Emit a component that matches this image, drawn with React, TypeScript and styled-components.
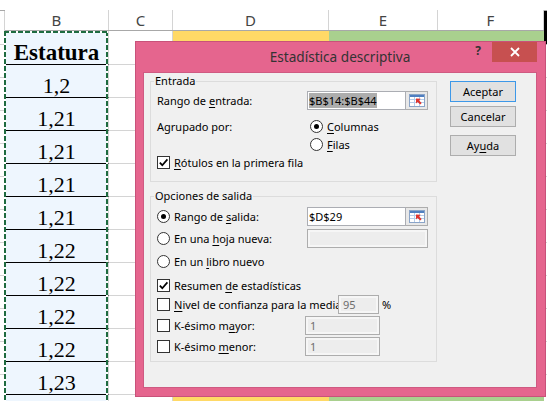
import styled, { createGlobalStyle } from "styled-components";

const GlobalStyle = createGlobalStyle`
  html, body {
    margin: 0;
    padding: 0;
    background: #fff;
    overflow: hidden;
  }
  body {
    font-family: "Noto Sans", "Open Sans", sans-serif;
  }
`;

type SheetCol = { name: string; width: number; fill?: string; grid?: boolean };

const sheetCols: SheetCol[] = [
  { name: "", width: 5, grid: true },
  { name: "B", width: 104 },
  { name: "C", width: 64, grid: true },
  { name: "D", width: 156, fill: "#ffd966" },
  { name: "E", width: 109, fill: "#a9d08e" },
  { name: "F", width: 106, fill: "#a9d08e" },
  { name: "", width: 60, grid: true },
];

// column B: header cell plus the first values of the range, last row is blank below the fold
const estatura = ["Estatura", "1,2", "1,21", "1,21", "1,21", "1,21", "1,22", "1,22", "1,22", "1,22", "1,23", ""];

const rowHeight = (i: number) => (i === 0 ? 34 : 33);

export default function App() {
  return (
    <>
      <GlobalStyle />
      <Sheet>
        {sheetCols.map((col, ci) => (
          <Column key={ci} $width={col.width}>
            <HeaderCell>
              <HeaderLabel>{col.name}</HeaderLabel>
            </HeaderCell>
            {col.name === "B" ? (
              <CopyRange>
                {estatura.map((v, i) => (
                  <DataCell key={i} $height={rowHeight(i)} $bold={i === 0}>
                    {v}
                  </DataCell>
                ))}
                <MarchingAnts />
              </CopyRange>
            ) : (
              estatura.map((_, i) => (
                <Cell
                  key={i}
                  $height={rowHeight(i)}
                  $fill={col.fill}
                  $grid={col.grid}
                  $active={ci === 6 && i === 0}
                />
              ))
            )}
          </Column>
        ))}

        <Dialog>
          <TitleBar>
            <Title>Estadística descriptiva</Title>
            <TitleControls>
              <HelpMark>?</HelpMark>
              <CloseButton>
                <svg width="10" height="10" viewBox="0 0 10 10">
                  <path d="M1 1L9 9M9 1L1 9" stroke="#fff" strokeWidth="1.8" />
                </svg>
              </CloseButton>
            </TitleControls>
          </TitleBar>

          <DialogBody>
            <Groups>
              <Group $top={0} $bottom={10}>
                <Legend>Entrada</Legend>
                <Row $cols="150px 99px 22px" $h={19} $gap={2}>
                  <span>
                    Rango de <u>e</u>ntrada:
                  </span>
                  <TextBox>
                    <Selected>$B$14:$B$44</Selected>
                  </TextBox>
                  <PickButton>
                    <RangeIcon />
                  </PickButton>
                </Row>
                <Row $cols="153px auto" $gap={7}>
                  <span>Agrupado por:</span>
                  <Choice>
                    <RadioDot $checked />
                    <span>
                      <u>C</u>olumnas
                    </span>
                  </Choice>
                </Row>
                <Row $cols="153px auto">
                  <span />
                  <Choice>
                    <RadioDot />
                    <span>
                      <u>F</u>ilas
                    </span>
                  </Choice>
                </Row>
                <Row>
                  <Choice>
                    <CheckBox $checked>
                      <CheckMark />
                    </CheckBox>
                    <span>
                      <u>R</u>ótulos en la primera fila
                    </span>
                  </Choice>
                </Row>
              </Group>

              <Group $top={6} $bottom={5}>
                <Legend>Opciones de salida</Legend>
                <Row $cols="150px 99px 22px" $h={19} $gap={3}>
                  <Choice>
                    <RadioDot $checked />
                    <span>
                      Rango de <u>s</u>alida:
                    </span>
                  </Choice>
                  <TextBox>$D$29</TextBox>
                  <PickButton>
                    <RangeIcon />
                  </PickButton>
                </Row>
                <Row $cols="150px 121px" $h={19} $gap={3}>
                  <Choice>
                    <RadioDot />
                    <span>
                      En una <u>h</u>oja nueva:
                    </span>
                  </Choice>
                  <TextBox $disabled />
                </Row>
                <Row $gap={4}>
                  <Choice>
                    <RadioDot />
                    <span>
                      En un <u>l</u>ibro nuevo
                    </span>
                  </Choice>
                </Row>
                <Row $gap={6}>
                  <Choice>
                    <CheckBox $checked>
                      <CheckMark />
                    </CheckBox>
                    <span>
                      Resumen <u>d</u>e estadísticas
                    </span>
                  </Choice>
                </Row>
                <Row $cols="181px 41px auto" $h={19} $gap={1}>
                  <Choice>
                    <CheckBox />
                    <span>
                      <u>N</u>ivel de confianza para la media
                    </span>
                  </Choice>
                  <TextBox $disabled>95</TextBox>
                  <Percent>%</Percent>
                </Row>
                <Row $cols="148px 75px" $h={19} $gap={2}>
                  <Choice>
                    <CheckBox />
                    <span>
                      K-ésimo m<u>a</u>yor:
                    </span>
                  </Choice>
                  <TextBox $disabled>1</TextBox>
                </Row>
                <Row $cols="148px 75px" $h={19} $gap={2}>
                  <Choice>
                    <CheckBox />
                    <span>
                      K-ésimo <u>m</u>enor:
                    </span>
                  </Choice>
                  <TextBox $disabled>1</TextBox>
                </Row>
              </Group>
            </Groups>

            <ButtonColumn>
              <DialogButton $default>Aceptar</DialogButton>
              <DialogButton $gap={4}>Cancelar</DialogButton>
              <DialogButton $gap={8}>
                Ay<u>u</u>da
              </DialogButton>
            </ButtonColumn>
          </DialogBody>
        </Dialog>
      </Sheet>
    </>
  );
}

function RangeIcon() {
  return (
    <svg width="16" height="13" viewBox="0 0 16 13">
      <rect x="0.5" y="0.5" width="15" height="12" fill="#fff" stroke="#8aa4c8" />
      <rect x="1" y="1" width="14" height="2" fill="#4f7fc0" />
      <path d="M1 5.5h14M1 8.5h14M5.5 3v9M10.5 3v9" stroke="#b6cdea" />
      <path d="M7 4.5v5l1.6-1.6 2.6 2.6 1.5-1.5-2.6-2.6 1.6-1.6z" fill="#e0342e" />
    </svg>
  );
}

function CheckMark() {
  return (
    <svg width="11" height="11" viewBox="0 0 11 11">
      <path d="M1.8 5.6L4.3 8.2L9.4 2.4" fill="none" stroke="#000" strokeWidth="1.7" />
    </svg>
  );
}

/* ---------- spreadsheet ---------- */

const Sheet = styled.div`
  position: relative;
  display: flex;
  height: 401px;
  overflow: hidden;
`;

const Column = styled.div<{ $width: number }>`
  flex: none;
  width: ${(p) => p.$width}px;
  display: flex;
  flex-direction: column;
`;

const HeaderCell = styled.div`
  height: 35px;
  box-sizing: border-box;
  padding-top: 10px;
  border-bottom: 1px solid #a8a8a8;
  display: flex;
`;

const HeaderLabel = styled.div`
  flex: 1;
  display: flex;
  align-items: center;
  justify-content: center;
  border-right: 1px solid #d4d4d4;
  font-size: 15px;
  color: #444;
`;

const Cell = styled.div<{ $height: number; $fill?: string; $grid?: boolean; $active?: boolean }>`
  flex: none;
  height: ${(p) => p.$height}px;
  box-sizing: border-box;
  background: ${(p) => p.$fill ?? "#fff"};
  border-bottom: ${(p) => (p.$grid ? "1px solid #d4d4d4" : "none")};
  border-right: ${(p) => (p.$grid ? "1px solid #d4d4d4" : "none")};
  border-left: ${(p) => (p.$active ? "3px solid #000" : "none")};
`;

const CopyRange = styled.div`
  position: relative;
  display: flex;
  flex-direction: column;
`;

/* Excel keeps values on the bottom of the cell */
const DataCell = styled.div<{ $height: number; $bold?: boolean }>`
  flex: none;
  height: ${(p) => p.$height}px;
  box-sizing: border-box;
  display: flex;
  align-items: flex-end;
  justify-content: center;
  line-height: 22px;
  background: #eef6fe;
  border-bottom: 1px solid #000;
  border-right: 1px solid #d4d4d4;
  font-family: "Liberation Serif", "Times New Roman", serif;
  font-size: ${(p) => (p.$bold ? 23 : 22)}px;
  font-weight: ${(p) => (p.$bold ? 700 : 400)};
  color: #000;
`;

const MarchingAnts = styled.div`
  position: absolute;
  top: 0;
  bottom: 0;
  left: -1px;
  right: 1px;
  pointer-events: none;
  background:
    repeating-linear-gradient(to right, #1e6b40 0 5px, #fff 5px 7px) top / 100% 2px no-repeat,
    repeating-linear-gradient(to bottom, #1e6b40 0 5px, #fff 5px 7px) left / 2px 100% no-repeat,
    repeating-linear-gradient(to bottom, #1e6b40 0 5px, #fff 5px 7px) right / 2px 100% no-repeat;
`;

/* ---------- dialog ---------- */

const Dialog = styled.div`
  position: absolute;
  left: 135px;
  top: 41px;
  width: 411px;
  height: 356px;
  box-sizing: border-box;
  display: flex;
  flex-direction: column;
  padding: 0 8px 8px 7px;
  background: #e5658e;
  border: 1px solid #c8527a;
`;

const TitleBar = styled.div`
  flex: none;
  height: 30px;
  display: grid;
  grid-template-columns: 1fr auto 1fr;
  align-items: start;
`;

const Title = styled.div`
  grid-column: 2;
  line-height: 30px;
  font-size: 13.6px;
  color: #333;
`;

const TitleControls = styled.div`
  grid-column: 3;
  justify-self: end;
  display: flex;
  align-items: flex-start;
`;

const HelpMark = styled.span`
  margin-right: 11px;
  line-height: 17px;
  font-size: 12px;
  font-weight: 700;
  color: #333;
`;

const CloseButton = styled.div`
  width: 45px;
  height: 20px;
  display: flex;
  align-items: center;
  justify-content: center;
  background: #c75050;
`;

const DialogBody = styled.div`
  flex: 1;
  display: flex;
  align-items: flex-start;
  padding-left: 6px;
  background: #f0f0f0;
  border: 1px solid #cf5a82;
  font-size: 11px;
  color: #000;

  u {
    text-underline-offset: 2px;
  }
`;

const Groups = styled.div`
  flex: none;
  width: 287px;
  display: flex;
  flex-direction: column;
`;

const Group = styled.fieldset<{ $top: number; $bottom: number }>`
  margin: ${(p) => p.$top}px 0 0;
  padding: 0 6px ${(p) => p.$bottom}px;
  min-width: 0;
  border: 1px solid #dcdcdc;
`;

const Legend = styled.legend`
  margin-left: -3px;
  padding: 0 1px;
  line-height: 16px;
`;

const Row = styled.div<{ $cols?: string; $h?: number; $gap?: number }>`
  display: grid;
  grid-template-columns: ${(p) => p.$cols ?? "1fr"};
  align-items: center;
  height: ${(p) => p.$h ?? 18}px;
  margin-top: ${(p) => p.$gap ?? 0}px;
  white-space: nowrap;
`;

const Choice = styled.label`
  display: flex;
  align-items: center;
  gap: 4px;
`;

const RadioDot = styled.span<{ $checked?: boolean }>`
  flex: none;
  width: 13px;
  height: 13px;
  box-sizing: border-box;
  border-radius: 50%;
  border: 1px solid #333;
  background: #fff;
  display: flex;
  align-items: center;
  justify-content: center;

  &::after {
    content: "";
    display: ${(p) => (p.$checked ? "block" : "none")};
    width: 5px;
    height: 5px;
    border-radius: 50%;
    background: #000;
  }
`;

const CheckBox = styled.span<{ $checked?: boolean }>`
  flex: none;
  width: 13px;
  height: 13px;
  box-sizing: border-box;
  border: 1px solid #333;
  background: #fff;
  display: flex;
  align-items: center;
  justify-content: center;

  svg {
    display: ${(p) => (p.$checked ? "block" : "none")};
  }
`;

const TextBox = styled.div<{ $disabled?: boolean }>`
  height: 19px;
  box-sizing: border-box;
  display: flex;
  align-items: center;
  padding-left: ${(p) => (p.$disabled ? 4 : 1)}px;
  border: 1px solid ${(p) => (p.$disabled ? "#adadad" : "#abadb3")};
  background: ${(p) => (p.$disabled ? "#ededed" : "#fff")};
  box-shadow: ${(p) => (p.$disabled ? "inset 0 0 0 2px #f6f6f6" : "none")};
  color: ${(p) => (p.$disabled ? "#6d6d6d" : "#000")};
  overflow: hidden;
`;

const Selected = styled.span`
  background: #adadad;
  line-height: 15px;
`;

const PickButton = styled.div`
  height: 19px;
  box-sizing: border-box;
  display: flex;
  align-items: center;
  justify-content: center;
  border: 1px solid #adadad;
  border-left: none;
  background: #e8e8e8;
`;

const Percent = styled.span`
  margin-left: 3px;
`;

const ButtonColumn = styled.div`
  flex: none;
  width: 66px;
  display: flex;
  flex-direction: column;
  margin: 8px 0 0 13px;
`;

const DialogButton = styled.button<{ $default?: boolean; $gap?: number }>`
  height: 21px;
  box-sizing: border-box;
  margin: ${(p) => p.$gap ?? 0}px 0 0;
  padding: 0;
  border: 1px solid ${(p) => (p.$default ? "#3d98e8" : "#adadad")};
  background: #e1e1e1;
  font-family: "Noto Sans", "Open Sans", sans-serif;
  font-size: 11px;
  color: #000;
`;
